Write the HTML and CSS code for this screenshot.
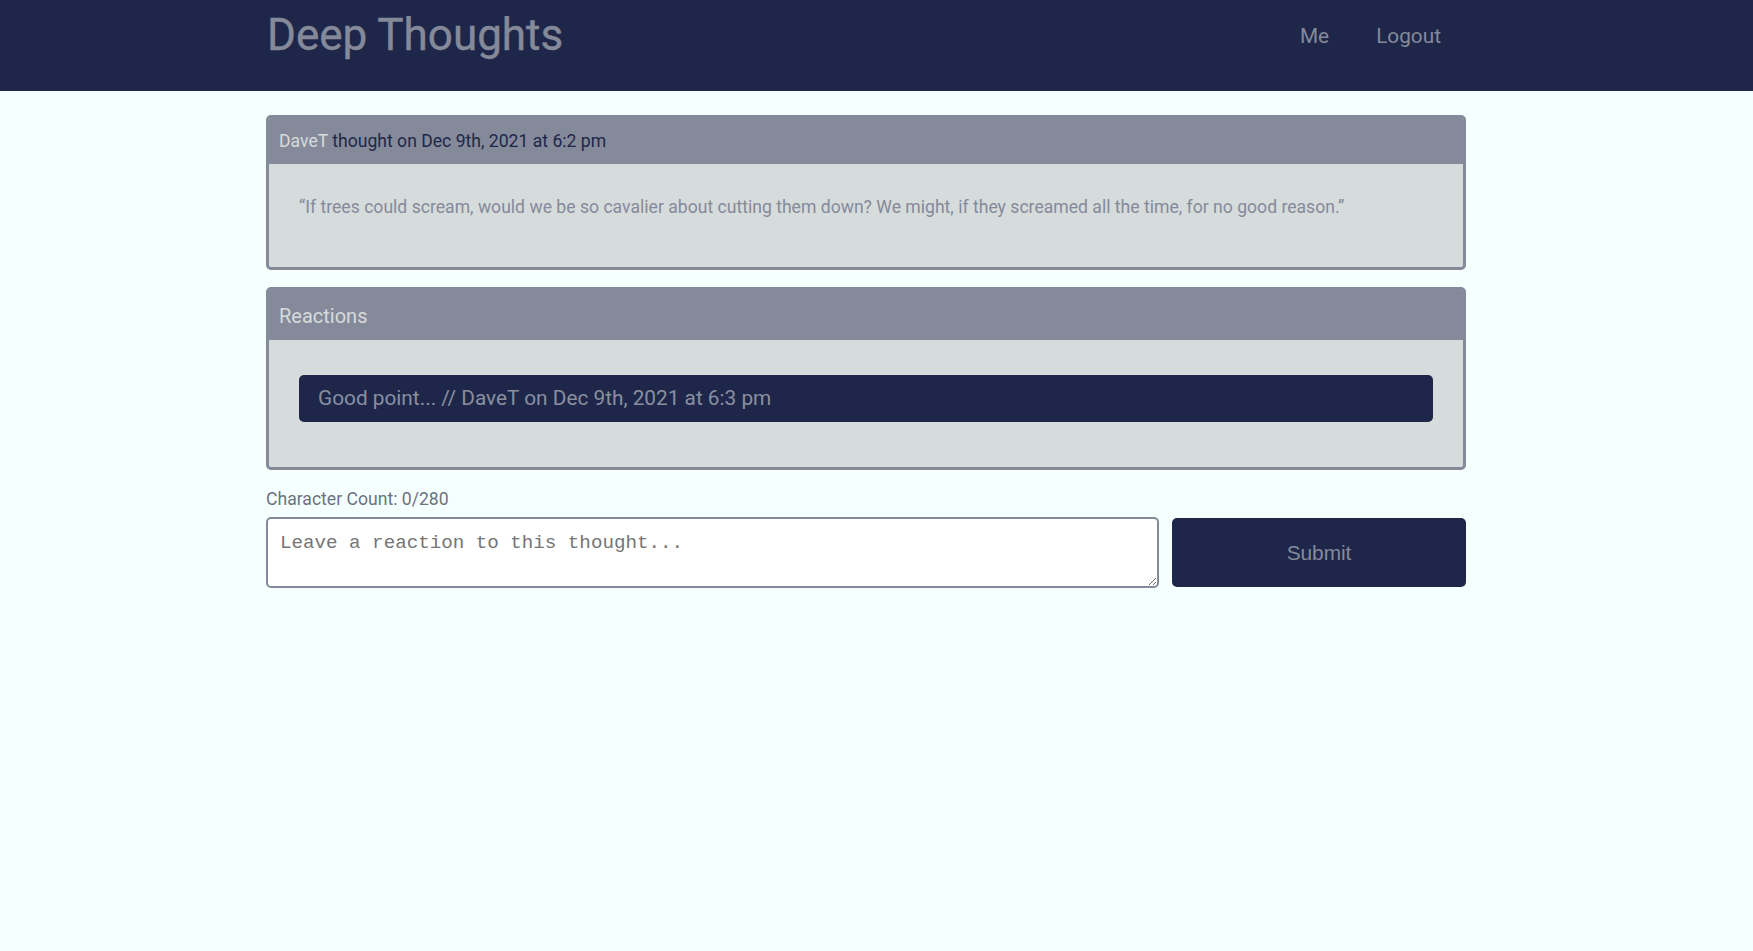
FILE: index.html
```html
<!DOCTYPE html>
<html lang="en">
<head>
<meta charset="utf-8">
<title>Deep Thoughts</title>
<link rel="stylesheet" href="styles.css">
</head>
<body>
<header class="site-header">
  <div class="container header-inner">
    <h1 class="brand">Deep Thoughts</h1>
    <nav class="nav">
      <a href="#" class="nav-link">Me</a>
      <a href="#" class="nav-link">Logout</a>
    </nav>
  </div>
</header>
<main class="container main">
  <section class="card">
    <div class="card-header">
      <span class="username">DaveT</span> thought on Dec 9th, 2021 at 6:2 pm
    </div>
    <div class="card-body">
      <p class="quote">“If trees could scream, would we be so cavalier about cutting them down? We might, if they screamed all the time, for no good reason.”</p>
    </div>
  </section>
  <section class="card">
    <div class="card-header reactions-header">Reactions</div>
    <div class="card-body reactions-body">
      <p class="pill">Good point... // DaveT on Dec 9th, 2021 at 6:3 pm</p>
    </div>
  </section>
  <div class="reaction-form">
    <p class="char-count">Character Count: 0/280</p>
    <form class="form-row">
      <textarea class="form-input" placeholder="Leave a reaction to this thought..."></textarea>
      <button type="submit" class="btn">Submit</button>
    </form>
  </div>
</main>
</body>
</html>
```
FILE: styles.css
```css
* { box-sizing: border-box; }
html, body {
  margin: 0;
  padding: 0;
}
body {
  background: #f5fffd;
  font-family: Roboto, "Liberation Sans", Arial, sans-serif;
  color: #1e2749;
  min-height: 951px;
}
.container {
  width: 1200px;
  margin-left: 266px;
}
.site-header {
  background: #1e2749;
  padding: 8px 0 29px;
}
.header-inner {
  display: flex;
  justify-content: space-between;
  align-items: flex-start;
}
.brand {
  margin: 0;
  font-size: 44px;
  font-weight: 400;
  line-height: 54px;
  color: #858a9a;
  padding-left: 1px;
  -webkit-text-stroke: 0.4px #858a9a;
}
.nav {
  display: flex;
  gap: 47px;
  margin-top: 16px;
  padding-right: 25px;
}
.nav-link {
  color: #858a9a;
  text-decoration: none;
  font-size: 20.8px;
  line-height: 25px;
}
.main {
  padding-top: 24px;
}
.card {
  border: 3px solid #858a9a;
  border-radius: 5px;
  background: #d6dbdc;
  margin-bottom: 17px;
  overflow: hidden;
}
.card-header {
  background: #858a9a;
  padding: 10px 10px 9px;
  font-size: 17.6px;
  line-height: 27px;
  color: #1e2749;
}
.username {
  color: #d6dbdc;
}
.card-body {
  padding: 30px 30px 47px;
}
.quote {
  margin: 0;
  font-size: 17.6px;
  line-height: 26px;
  color: #858a9a;
}
.reactions-header {
  font-size: 20px;
  line-height: 30px;
  padding: 11px 10px 9px;
  color: #d6dbdc;
}
.reactions-body {
  padding: 35px 30px 45px;
}
.pill {
  margin: 0;
  background: #1e2749;
  color: #8a8fa0;
  border-radius: 5px;
  padding: 0 19px 2px;
  height: 47px;
  display: flex;
  align-items: center;
  font-size: 20.8px;
}
.reaction-form {
  margin-top: 5px;
}
.char-count {
  margin: 0 0 6px;
  font-size: 17.6px;
  line-height: 24px;
  color: #6b7282;
}
.form-row {
  display: flex;
  gap: 13px;
  align-items: flex-start;
}
.form-input {
  flex: 1;
  height: 71px;
  border: 2px solid #858a9a;
  border-radius: 5px;
  background: #fff;
  padding: 13px 12px 9px;
  font-family: "Liberation Mono", "Courier New", monospace;
  font-size: 19.2px;
  color: #333;
}
.form-input::placeholder {
  color: #757575;
}
.btn {
  width: 294px;
  height: 69px;
  margin-top: 1px;
  border: none;
  border-radius: 5px;
  background: #1e2749;
  color: #858a9a;
  font-family: "Liberation Sans", Arial, sans-serif;
  font-size: 20.8px;
}
```
